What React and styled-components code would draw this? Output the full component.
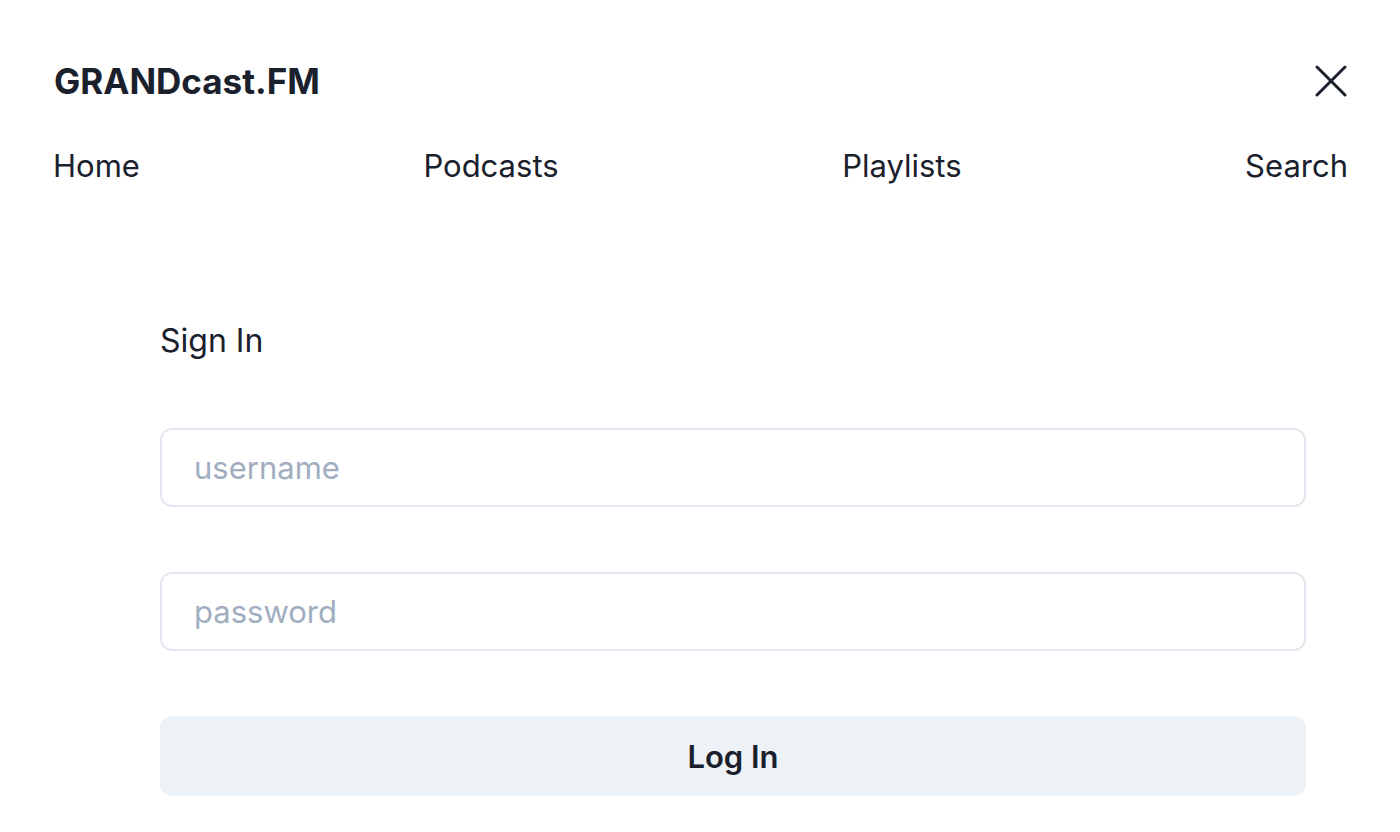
import React from 'react';
import styled, { createGlobalStyle } from 'styled-components';

const GlobalStyle = createGlobalStyle`
  body {
    margin: 0;
    background: #fff;
    color: #1a202c;
    font-family: Inter, "Noto Sans", sans-serif;
  }
  * { box-sizing: border-box; }
`;

const Page = styled.div`
  padding: 0 52px 0 53px;
`;

const Header = styled.header`
  display: flex;
  align-items: center;
  justify-content: space-between;
  padding-top: 60px;
`;

const Logo = styled.div`
  font-size: 35px;
  font-weight: 700;
  line-height: 42px;
  padding-left: 1px;
`;

const CloseButton = styled.button`
  display: flex;
  align-items: center;
  justify-content: center;
  width: 36px;
  height: 36px;
  padding: 0;
  margin-right: -1px;
  border: none;
  background: none;
  color: #1a202c;
  cursor: pointer;
`;

const Nav = styled.nav`
  display: flex;
  justify-content: space-between;
  margin-top: 45px;
`;

const NavLink = styled.a`
  font-size: 31px;
  line-height: 38px;
  color: #1a202c;
  text-decoration: none;
`;

const Form = styled.form`
  display: flex;
  flex-direction: column;
  width: 1146px;
  margin: 137px 0 0 107px;
`;

const Title = styled.h2`
  margin: 0 0 68px;
  font-size: 32px;
  font-weight: 400;
  line-height: 38px;
`;

const Input = styled.input`
  height: 79px;
  margin-bottom: 65px;
  padding: 0 32px;
  border: 2px solid #e2e8f0;
  border-radius: 12px;
  font-family: inherit;
  font-size: 31px;
  color: #1a202c;
  outline: none;

  &::placeholder {
    color: #a0aec0;
  }
`;

const SubmitButton = styled.button`
  height: 80px;
  border: none;
  border-radius: 12px;
  background: #edf2f7;
  font-family: inherit;
  font-size: 31px;
  font-weight: 600;
  color: #1a202c;
  cursor: pointer;
`;

const CloseIcon = () => (
  <svg width="32" height="32" viewBox="0 0 32 32" fill="none" stroke="currentColor" strokeWidth="3" strokeLinecap="round">
    <line x1="2" y1="2" x2="30" y2="30" />
    <line x1="30" y1="2" x2="2" y2="30" />
  </svg>
);

const links = ['Home', 'Podcasts', 'Playlists', 'Search'];

const App = () => (
  <>
    <GlobalStyle />
    <Page>
      <Header>
        <Logo>GRANDcast.FM</Logo>
        <CloseButton aria-label="Close menu"><CloseIcon /></CloseButton>
      </Header>
      <Nav>
        {links.map(l => <NavLink key={l} href="#">{l}</NavLink>)}
      </Nav>
      <Form onSubmit={e => e.preventDefault()}>
        <Title>Sign In</Title>
        <Input placeholder="username" />
        <Input type="password" placeholder="password" />
        <SubmitButton type="submit">Log In</SubmitButton>
      </Form>
    </Page>
  </>
);

export default App;
